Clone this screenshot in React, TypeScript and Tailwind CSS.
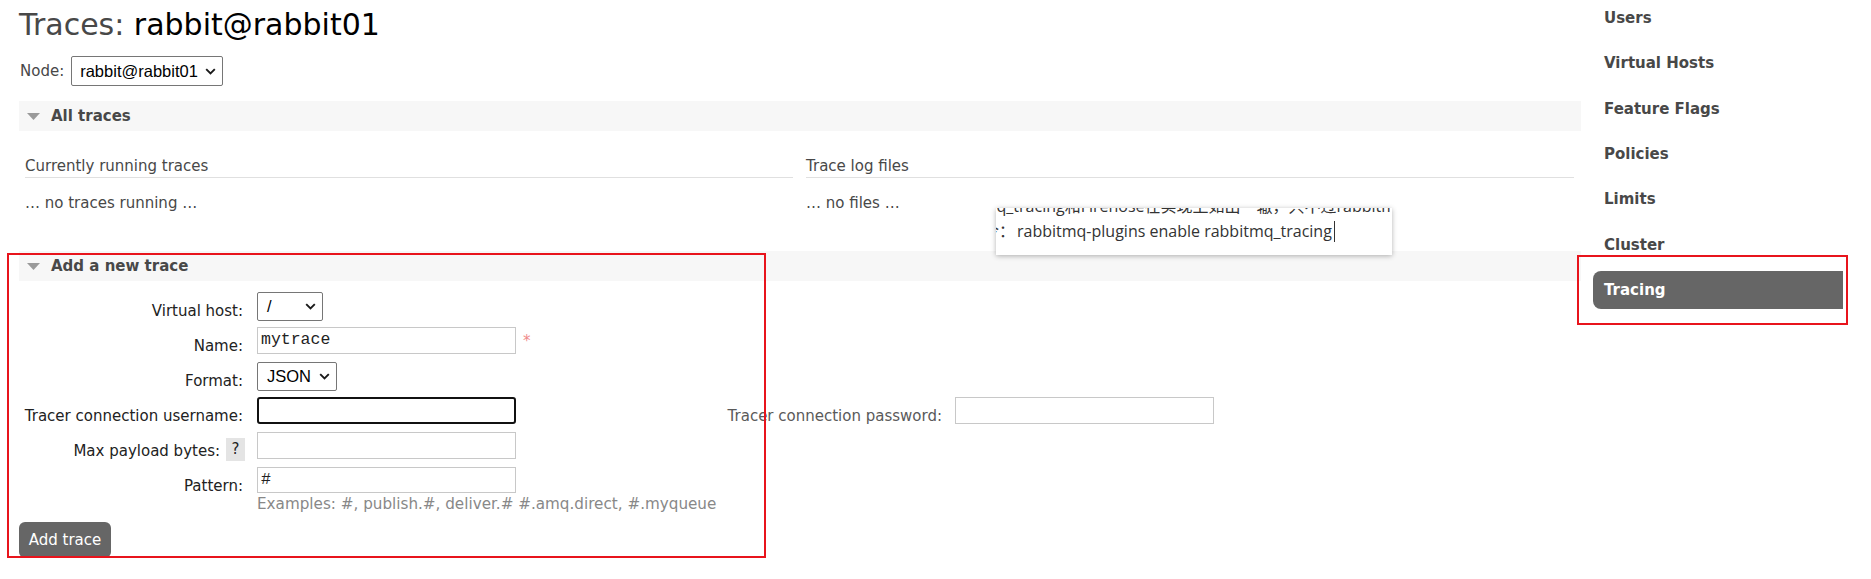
import React from "react"

const verdana = { fontFamily: '"DejaVu Sans", Verdana, sans-serif' }
const arial = { fontFamily: '"Liberation Sans", Arial, sans-serif' }
const mono = { fontFamily: '"Liberation Mono", "Courier New", monospace' }
const yahei = { fontFamily: '"Open Sans", "Noto Sans CJK SC", sans-serif' }

const navItems = ["Users", "Virtual Hosts", "Feature Flags", "Policies", "Limits", "Cluster", "Tracing"]

function Chevron() {
  return (
    <svg width="11" height="7" viewBox="0 0 11 7">
      <path d="M1.2 1.2l4.3 4.3 4.3-4.3" stroke="#1a1a1a" strokeWidth="1.9" fill="none" />
    </svg>
  )
}

function FakeSelect({ value, className }: { value: string; className: string }) {
  return (
    <div
      className={`flex items-center justify-between border border-[#767676] rounded-[2px] bg-white pl-[8px] pr-[6px] text-[16.5px] text-black ${className}`}
      style={arial}
    >
      <span>{value}</span>
      <Chevron />
    </div>
  )
}

function SectionBar({ title }: { title: string }) {
  return (
    <div className="flex items-center h-[30px] bg-[#f7f7f7] pl-[8px]">
      <svg width="13" height="7" viewBox="0 0 13 7" className="mt-[1px]">
        <polygon points="0,0 13,0 6.5,7" fill="#9a9a9a" />
      </svg>
      <span className="ml-[11px] mt-[1px] text-[15px] font-bold text-[#484848]">{title}</span>
    </div>
  )
}

function Label({ children }: { children: React.ReactNode }) {
  return (
    <div className="w-[224px] shrink-0 text-right pt-[9px] leading-[20px] text-[15px] text-[#222]">
      {children}
    </div>
  )
}

function TextBox({ value, focused }: { value?: string; focused?: boolean }) {
  return (
    <div
      className={
        focused
          ? "w-[259px] h-[27px] border-2 border-[#111] rounded-[3px] bg-white"
          : "w-[259px] h-[27px] border border-[#c8c8c8] bg-white flex items-center pl-[3px] text-[16.5px] text-[#222]"
      }
      style={mono}
    >
      {value}
    </div>
  )
}

export default function App() {
  return (
    <div className="relative w-[1871px] h-[579px] overflow-hidden bg-white text-[#484848]" style={verdana}>
      <div className="flex">
        {/* main column */}
        <div className="ml-[19px] w-[1562px] shrink-0 pt-[8px]">
          <h1 className="text-[30px] leading-[34px] font-normal">
            <span className="text-[#484848]">Traces: </span>
            <span className="text-black">rabbit@rabbit01</span>
          </h1>

          <div className="flex items-center mt-[14px]">
            <span className="text-[15px] ml-[1px]">Node:</span>
            <FakeSelect value="rabbit@rabbit01" className="ml-[7px] w-[152px] h-[30px]" />
          </div>

          <div className="mt-[15px]">
            <SectionBar title="All traces" />
          </div>

          <div className="grid grid-cols-2 gap-[13px] pl-[6px] pr-[7px] mt-[25px] text-[15px]">
            <div>
              <div className="leading-[20px] pb-[1px] border-b border-[#e0e0e0]">Currently running traces</div>
              <div className="leading-[20px] mt-[15px]">… no traces running …</div>
            </div>
            <div>
              <div className="leading-[20px] pb-[1px] border-b border-[#e0e0e0]">Trace log files</div>
              <div className="leading-[20px] mt-[15px]">… no files …</div>
            </div>
          </div>

          <div className="mt-[38px]">
            <SectionBar title="Add a new trace" />
          </div>

          {/* form */}
          <div className="mt-[11px]">
            <div className="flex h-[35px]">
              <Label>Virtual host:</Label>
              <FakeSelect value="/" className="ml-[14px] w-[66px] h-[29px] pl-[9px] pr-[5px]" />
            </div>
            <div className="flex h-[35px]">
              <Label>Name:</Label>
              <div className="ml-[14px]">
                <TextBox value="mytrace" />
              </div>
              <span className="ml-[7px] mt-[3px] text-[15px] text-[#f08a8a]">*</span>
            </div>
            <div className="flex h-[35px]">
              <Label>Format:</Label>
              <FakeSelect value="JSON" className="ml-[14px] w-[80px] h-[29px] pl-[9px]" />
            </div>
            <div className="flex h-[35px]">
              <Label>Tracer connection username:</Label>
              <div className="ml-[14px]">
                <TextBox focused />
              </div>
              <div className="w-[426px] shrink-0 text-right pt-[9px] leading-[20px] text-[15px] text-[#5a5a5a]">
                Tracer connection password:
              </div>
              <div className="ml-[13px]">
                <TextBox />
              </div>
            </div>
            <div className="flex h-[35px]">
              <div className="w-[224px] shrink-0 flex justify-end text-[15px] text-[#222]">
                <span className="pt-[9px] leading-[20px]">Max payload bytes:</span>
                <span className="ml-[6px] mr-[-2px] mt-[6px] w-[19px] h-[23px] bg-[#e4e4e4] flex items-center justify-center">
                  ?
                </span>
              </div>
              <div className="ml-[14px]">
                <TextBox />
              </div>
            </div>
            <div className="flex h-[27px]">
              <Label>Pattern:</Label>
              <div className="ml-[14px]">
                <div
                  className="w-[259px] h-[26px] border border-[#c8c8c8] bg-white flex items-center pl-[3px] text-[16.5px] text-[#222]"
                  style={mono}
                >
                  #
                </div>
              </div>
            </div>
            <div className="ml-[238px] leading-[20px] text-[15.2px] text-[#888]">
              Examples: #, publish.#, deliver.# #.amq.direct, #.myqueue
            </div>
            <button className="mt-[8px] w-[92px] h-[36px] rounded-[6px] bg-[#666] text-white text-[15px] flex items-center justify-center">
              Add trace
            </button>
          </div>
        </div>

        {/* sidebar */}
        <div className="ml-[12px] w-[250px] shrink-0 flex flex-col gap-[7.4px] mt-[-1px]">
          {navItems.map((item) => (
            <div
              key={item}
              className={
                item === "Tracing"
                  ? "h-[38px] flex items-center pl-[11px] text-[15px] font-bold text-white bg-[#666] rounded-l-[8px]"
                  : "h-[38px] flex items-center pl-[11px] text-[15px] font-bold text-[#484848]"
              }
            >
              {item}
            </div>
          ))}
        </div>
      </div>

      {/* pasted popup over the page */}
      <div
        className="absolute left-[996px] top-[208px] w-[396px] h-[47px] bg-white overflow-hidden shadow-[0_1px_5px_rgba(0,0,0,0.3)] text-[16px] leading-[25px] text-[#333] whitespace-nowrap"
        style={yahei}
      >
        <div className="mt-[-14px] ml-[-59px]">rabbitmq_tracing和Firehose在实现上如出一辙，只不过rabbitmq_tracing多了一层GUI的包装</div>
        <div className="flex items-center ml-[-13px]">
          <span>令：</span>
          <span className="ml-[2px]">rabbitmq-plugins enable rabbitmq_tracing</span>
          <span className="ml-[2px] w-[1px] h-[21px] bg-[#333]" />
        </div>
      </div>

      {/* red annotation frames */}
      <div className="absolute left-[7px] top-[253px] w-[759px] h-[305px] border-2 border-[#e8141c]" />
      <div className="absolute left-[1577px] top-[255px] w-[271px] h-[70px] border-2 border-[#e8141c]" />
    </div>
  )
}
